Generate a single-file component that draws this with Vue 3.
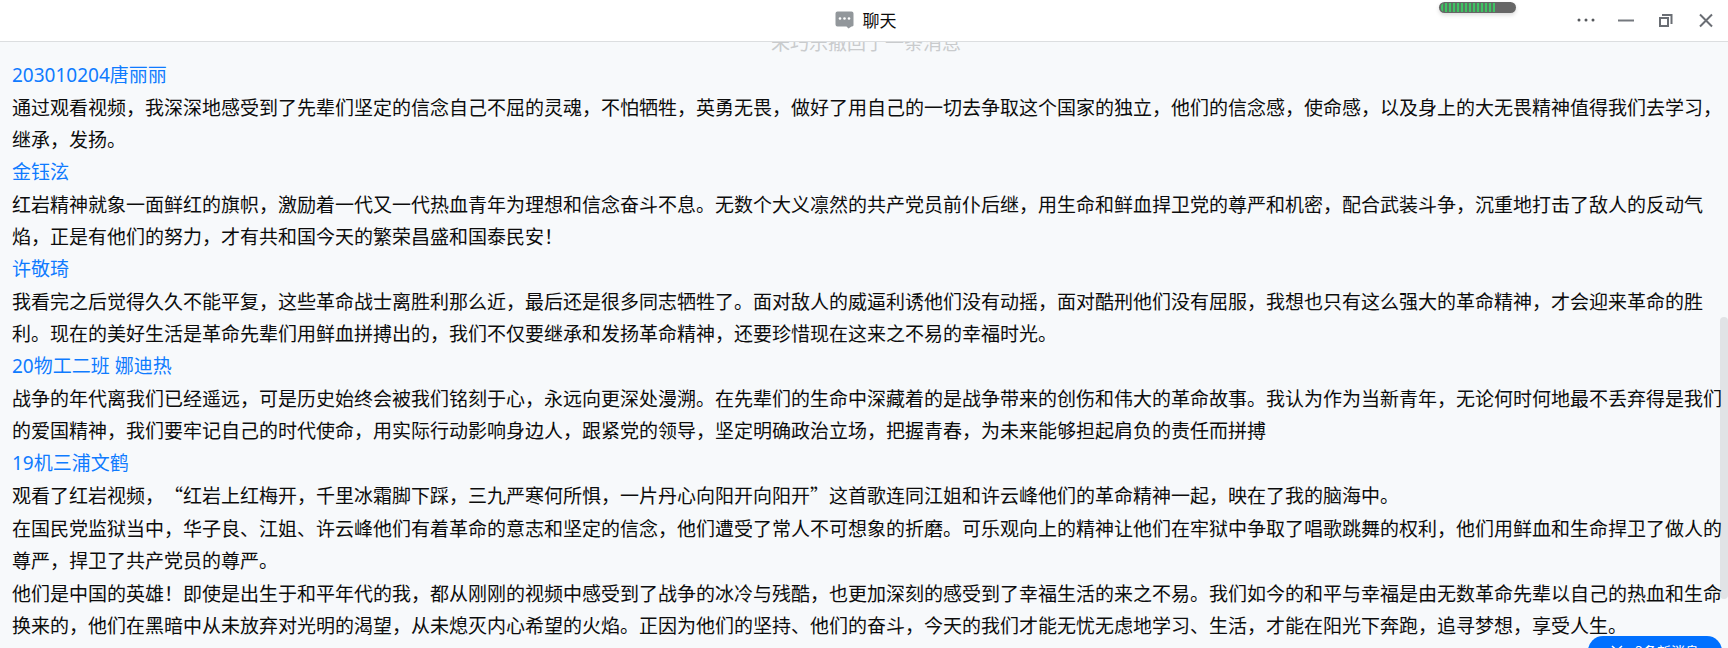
<script setup>
const recall = '朱巧乐撤回了一条消息'

const messages = [
  {
    name: '203010204唐丽丽',
    paragraphs: [
      '通过观看视频，我深深地感受到了先辈们坚定的信念自己不屈的灵魂，不怕牺牲，英勇无畏，做好了用自己的一切去争取这个国家的独立，他们的信念感，使命感，以及身上的大无畏精神值得我们去学习，继承，发扬。',
    ],
  },
  {
    name: '金钰泫',
    paragraphs: [
      '红岩精神就象一面鲜红的旗帜，激励着一代又一代热血青年为理想和信念奋斗不息。无数个大义凛然的共产党员前仆后继，用生命和鲜血捍卫党的尊严和机密，配合武装斗争，沉重地打击了敌人的反动气焰，正是有他们的努力，才有共和国今天的繁荣昌盛和国泰民安！',
    ],
  },
  {
    name: '许敬琦',
    paragraphs: [
      '我看完之后觉得久久不能平复，这些革命战士离胜利那么近，最后还是很多同志牺牲了。面对敌人的威逼利诱他们没有动摇，面对酷刑他们没有屈服，我想也只有这么强大的革命精神，才会迎来革命的胜利。现在的美好生活是革命先辈们用鲜血拼搏出的，我们不仅要继承和发扬革命精神，还要珍惜现在这来之不易的幸福时光。',
    ],
  },
  {
    name: '20物工二班 娜迪热',
    paragraphs: [
      '战争的年代离我们已经遥远，可是历史始终会被我们铭刻于心，永远向更深处漫溯。在先辈们的生命中深藏着的是战争带来的创伤和伟大的革命故事。我认为作为当新青年，无论何时何地最不丢弃得是我们的爱国精神，我们要牢记自己的时代使命，用实际行动影响身边人，跟紧党的领导，坚定明确政治立场，把握青春，为未来能够担起肩负的责任而拼搏',
    ],
  },
  {
    name: '19机三浦文鹤',
    paragraphs: [
      '观看了红岩视频，“红岩上红梅开，千里冰霜脚下踩，三九严寒何所惧，一片丹心向阳开向阳开”这首歌连同江姐和许云峰他们的革命精神一起，映在了我的脑海中。',
      '在国民党监狱当中，华子良、江姐、许云峰他们有着革命的意志和坚定的信念，他们遭受了常人不可想象的折磨。可乐观向上的精神让他们在牢狱中争取了唱歌跳舞的权利，他们用鲜血和生命捍卫了做人的尊严，捍卫了共产党员的尊严。',
      '他们是中国的英雄！即使是出生于和平年代的我，都从刚刚的视频中感受到了战争的冰冷与残酷，也更加深刻的感受到了幸福生活的来之不易。我们如今的和平与幸福是由无数革命先辈以自己的热血和生命换来的，他们在黑暗中从未放弃对光明的渴望，从未熄灭内心希望的火焰。正因为他们的坚持、他们的奋斗，今天的我们才能无忧无虑地学习、生活，才能在阳光下奔跑，追寻梦想，享受人生。',
    ],
  },
]
</script>

<template>
  <div class="window" lang="zh-CN">
    <header class="titlebar">
      <h1 class="title">
        <svg class="title-icon" width="20" height="18" viewBox="0 0 20 18" aria-hidden="true">
          <path d="M2.500 0.500h14a2 2 0 0 1 2 2v12a2 2 0 0 1-2 1l-3 2l-2-2h-9a2 2 0 0 1-2-2v-11a2 2 0 0 1 2-2z" fill="#92979b" />
          <circle cx="5" cy="7.500" r="1.300" fill="#fff" />
          <circle cx="9.500" cy="7.500" r="1.300" fill="#fff" />
          <circle cx="14" cy="7.500" r="1.300" fill="#fff" />
        </svg>
        <span>聊天</span>
      </h1>
      <div class="meter"><div class="meter-level"></div></div>
      <nav class="controls">
        <button type="button" aria-label="更多">
          <svg width="20" height="20" viewBox="0 0 20 20" fill="#55585c">
            <circle cx="3" cy="10" r="1.500" /><circle cx="10" cy="10" r="1.500" /><circle cx="17" cy="10" r="1.500" />
          </svg>
        </button>
        <button type="button" aria-label="最小化">
          <svg width="20" height="20" viewBox="0 0 20 20" stroke="#74787e" stroke-width="2"><path d="M2 10.500h16" /></svg>
        </button>
        <button type="button" aria-label="还原">
          <svg width="20" height="20" viewBox="0 0 20 20" fill="none" stroke="#6a6e74" stroke-width="2">
            <path d="M4 8h8v8h-8zM6 5h9.500v9" />
          </svg>
        </button>
        <button type="button" aria-label="关闭">
          <svg width="20" height="20" viewBox="0 0 20 20" fill="none" stroke="#6a6e74" stroke-width="2">
            <path d="M4 4.500l12 12M16 4.500l-12 12" />
          </svg>
        </button>
      </nav>
    </header>

    <main class="chat">
      <div class="scroll-thumb"></div>
      <div class="log">
        <p class="recall">{{ recall }}</p>
        <article v-for="m in messages" :key="m.name" class="message">
          <h2 class="name">{{ m.name }}</h2>
          <div class="body">
            <p v-for="(p, i) in m.paragraphs" :key="i">{{ p }}</p>
          </div>
        </article>
      </div>
      <button type="button" class="unread">
        <svg width="12" height="12" viewBox="0 0 12 12" fill="none" stroke="#fff" stroke-width="1.500" aria-hidden="true">
          <path d="M1 1l5 4.500l5-4.500M1 6l5 4.500l5-4.500" />
        </svg>
        <span>3条新消息</span>
      </button>
    </main>
  </div>
</template>

<style>
body {
  margin: 0;
}
</style>

<style scoped>
.window {
  display: flex;
  flex-direction: column;
  height: 100vh;
  overflow: hidden;
  background: #f7f9fb;
  color: #0c0c0c;
  font-family: "Noto Sans CJK SC", sans-serif;
  text-spacing-trim: space-all;
}

.titlebar {
  position: relative;
  flex: none;
  display: flex;
  align-items: center;
  justify-content: center;
  height: 41px;
  background: #fff;
  border-bottom: 1px solid #dcdee0;
  z-index: 1;
}

.title {
  display: flex;
  align-items: center;
  gap: 8px;
  margin: 0;
  padding: 0 0 1px 3px;
  font-size: 17px;
  line-height: 24px;
  font-weight: 400;
}

.meter {
  position: absolute;
  top: 2px;
  right: 212px;
  box-sizing: border-box;
  width: 77px;
  height: 11px;
  padding: 1px 2px;
  border-radius: 6px;
  background: #666;
  box-shadow: 0 2px 4px rgba(0, 0, 0, 0.15);
}

.meter-level {
  width: 54px;
  height: 9px;
  border-radius: 4px 0 0 4px;
  background: repeating-linear-gradient(90deg, #3fc463 0 2px, #5b7562 2px 4px);
}

.controls {
  position: absolute;
  top: 10px;
  right: 12px;
  display: flex;
  gap: 20px;
}

.controls button {
  display: flex;
  width: 20px;
  height: 20px;
  padding: 0;
  border: 0;
  background: none;
}

.chat {
  position: relative;
  flex: 1;
  min-height: 0;
  overflow: hidden;
}

.log {
  position: relative;
  display: flex;
  flex-direction: column;
  gap: 1px;
  margin-top: -16px;
  padding: 0 6px 0 12px;
  font-size: 19px;
  line-height: 32px;
}

.log p {
  margin: 0;
}

.log .recall {
  padding-right: 2px;
  color: #c9cbcd;
  text-align: center;
}

.name {
  margin: 0;
  color: #0f7bff;
  font-family: "Noto Sans", "Noto Sans CJK SC", sans-serif;
  font-size: 19px;
  font-weight: 400;
}

.body {
  display: flex;
  flex-direction: column;
  gap: 1px;
}

.scroll-thumb {
  position: absolute;
  top: 275px;
  right: 0;
  bottom: 49px;
  width: 8px;
  border-radius: 4px;
  background: #e1e3e6;
}

.unread {
  position: absolute;
  right: 6px;
  bottom: -18px;
  display: flex;
  align-items: center;
  justify-content: center;
  gap: 12px;
  width: 134px;
  height: 30px;
  padding: 0;
  border: 0;
  border-radius: 15px;
  background: #0070ff;
  color: #fff;
  font-family: inherit;
  font-size: 14px;
  line-height: 20px;
}
</style>
